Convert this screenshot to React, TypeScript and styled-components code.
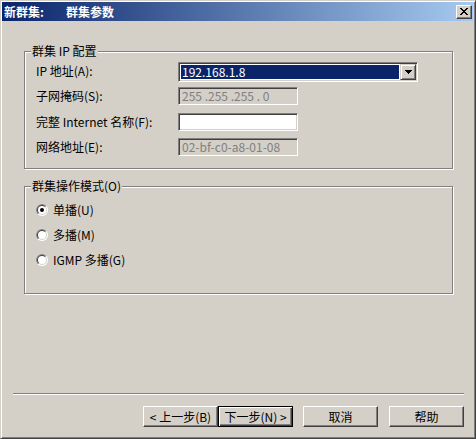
import React from 'react'
import styled, { createGlobalStyle } from 'styled-components'

const GlobalStyle = createGlobalStyle`
  html, body {
    margin: 0;
    padding: 0;
    background: #d4d0c8;
  }
  body {
    font-family: "Noto Sans CJK SC", "DejaVu Sans", sans-serif;
    font-size: 12px;
    color: #000;
  }
  * {
    box-sizing: border-box;
  }
`

function CloseGlyph() {
  return (
    <svg width="8" height="7" viewBox="0 0 8 7" shapeRendering="crispEdges">
      <path
        d="M0 0h2v1h-2z M6 0h2v1h-2z M1 1h2v1h-2z M5 1h2v1h-2z M2 2h4v1h-4z M3 3h2v1h-2z M2 4h4v1h-4z M1 5h2v1h-2z M5 5h2v1h-2z M0 6h2v1h-2z M6 6h2v1h-2z"
        fill="#000"
      />
    </svg>
  )
}

function DownArrow() {
  return (
    <svg width="7" height="4" viewBox="0 0 7 4" shapeRendering="crispEdges">
      <path d="M0 0h7v1h-1v1h-1v1h-1v1h-1v-1h-1v-1h-1v-1h-1z" fill="#000" />
    </svg>
  )
}

// classic 3d radio circle
function RadioMark({ checked }: { checked?: boolean }) {
  return (
    <svg width="12" height="12" viewBox="0 0 12 12">
      <circle cx="6" cy="6" r="6" fill="#fff" />
      <path d="M1.757 10.243 A6 6 0 0 1 10.243 1.757 Z" fill="#808080" />
      <circle cx="6" cy="6" r="5" fill="#d4d0c8" />
      <path d="M2.464 9.536 A5 5 0 0 1 9.536 2.464 Z" fill="#404040" />
      <circle cx="6" cy="6" r="4" fill="#fff" />
      {checked && <circle cx="6" cy="6" r="2" fill="#000" />}
    </svg>
  )
}

function App() {
  return (
    <>
      <GlobalStyle />
      <Window>
        <TitleBar>
          <Title>
            新群集:<TitlePart>群集参数</TitlePart>
          </Title>
          <CloseButton>
            <CloseGlyph />
          </CloseButton>
        </TitleBar>

        <Main>
          <GroupBox>
            <Legend>群集 IP 配置</Legend>
            <FormGrid>
              <Label>IP 地址(A):</Label>
              <Combo>
                <ComboValue>192.168.1.8</ComboValue>
                <ComboButton>
                  <DownArrow />
                </ComboButton>
              </Combo>

              <Label $disabled>子网掩码(S):</Label>
              <TextBox $disabled>255 .255 .255 . 0</TextBox>

              <Label>完整 Internet 名称(F):</Label>
              <TextBox />

              <Label $disabled>网络地址(E):</Label>
              <TextBox $disabled>02-bf-c0-a8-01-08</TextBox>
            </FormGrid>
          </GroupBox>

          <GroupBox $gap={10}>
            <Legend>群集操作模式(O)</Legend>
            <RadioList>
              <RadioRow>
                <RadioMark checked />
                <span>单播(U)</span>
              </RadioRow>
              <RadioRow>
                <RadioMark />
                <span>多播(M)</span>
              </RadioRow>
              <RadioRow>
                <RadioMark />
                <span>IGMP 多播(G)</span>
              </RadioRow>
            </RadioList>
          </GroupBox>
        </Main>

        <Separator />
        <ButtonRow>
          <PushButton>&lt; 上一步(B)</PushButton>
          <PushButton $default>下一步(N) &gt;</PushButton>
          <PushButton $space={10}>取消</PushButton>
          <PushButton $space={11}>帮助</PushButton>
        </ButtonRow>
      </Window>
    </>
  )
}

export default App

const Window = styled.div`
  width: 476px;
  height: 439px;
  display: flex;
  flex-direction: column;
  background: #d4d0c8;
  border: 1px solid;
  border-color: #d4d0c8 #404040 #404040 #d4d0c8;
  box-shadow: inset 1px 1px 0 #fff, inset -1px -1px 0 #808080;
  padding: 1px 2px 1px 1px;
`

const TitleBar = styled.div`
  height: 19px;
  flex-shrink: 0;
  display: flex;
  align-items: center;
  justify-content: space-between;
  padding-left: 2px;
  background: linear-gradient(to right, #0a246a, #a6caf0);
`

const Title = styled.div`
  color: #fff;
  font-weight: 700;
  font-size: 12px;
  line-height: 14px;
  white-space: nowrap;
  padding-top: 1px;
`

const TitlePart = styled.span`
  margin-left: 22px;
`

const CloseButton = styled.div`
  width: 16px;
  height: 14px;
  margin-right: 1px;
  display: flex;
  align-items: center;
  justify-content: center;
  background: #d4d0c8;
  border: 1px solid;
  border-color: #fff #404040 #404040 #fff;
  box-shadow: inset -1px -1px 0 #808080;
`

const Main = styled.div`
  flex: 1;
  display: flex;
  flex-direction: column;
  padding: 23px 20px 0 22px;
`

const GroupBox = styled.fieldset<{ $gap?: number }>`
  margin: ${(p) => p.$gap ?? 0}px 0 0 0;
  padding: 0;
  min-width: 0;
  border: 1px solid #808080;
  box-shadow: inset 1px 1px 0 #fff, 1px 1px 0 #fff;
`

const Legend = styled.legend`
  margin-left: 6px;
  padding: 0 1px;
  font-size: 12px;
  line-height: 14px;
  background: #d4d0c8;
`

const FormGrid = styled.div`
  display: grid;
  grid-template-columns: 142px 1fr;
  grid-template-rows: 25px 26px 25px 18px;
  align-items: start;
  padding: 4px 12px 12px 11px;
`

const Label = styled.div<{ $disabled?: boolean }>`
  line-height: 18px;
  white-space: nowrap;
`

const Combo = styled.div`
  width: 240px;
  height: 20px;
  display: flex;
  background: #fff;
  border: 1px solid;
  border-color: #808080 #fff #fff #808080;
  box-shadow: inset 1px 1px 0 #404040, inset -1px -1px 0 #d4d0c8;
  padding: 1px;
`

const ComboValue = styled.div`
  flex: 1;
  margin: 1px;
  padding-left: 1px;
  background: #0a246a;
  color: #fff;
  font-size: 12px;
  line-height: 14px;
`

const ComboButton = styled.div`
  width: 16px;
  height: 16px;
  display: flex;
  align-items: center;
  justify-content: center;
  background: #d4d0c8;
  border: 1px solid;
  border-color: #d4d0c8 #404040 #404040 #d4d0c8;
  box-shadow: inset 1px 1px 0 #fff, inset -1px -1px 0 #808080;
`

const TextBox = styled.div<{ $disabled?: boolean }>`
  width: 120px;
  height: 18px;
  padding: 1px 3px 0;
  font-size: 12px;
  line-height: 14px;
  white-space: pre;
  background: ${(p) => (p.$disabled ? '#d4d0c8' : '#fff')};
  color: ${(p) => (p.$disabled ? '#808080' : '#000')};
  border: 1px solid;
  border-color: #808080 #fff #fff #808080;
  box-shadow: inset 1px 1px 0 #404040, inset -1px -1px 0 #d4d0c8;
`

const RadioList = styled.div`
  display: flex;
  flex-direction: column;
  padding: 4px 0 21px 11px;
`

const RadioRow = styled.div`
  height: 25px;
  display: flex;
  align-items: center;
  gap: 5px;
  white-space: nowrap;
`

const Separator = styled.div`
  flex-shrink: 0;
  height: 2px;
  margin: 0 9px 0 11px;
  border-top: 1px solid #808080;
  border-bottom: 1px solid #fff;
`

const ButtonRow = styled.div`
  flex-shrink: 0;
  display: flex;
  justify-content: flex-end;
  margin: 11px 0 10px;
  padding-right: 9px;
`

const PushButton = styled.div<{ $default?: boolean; $space?: number }>`
  width: 75px;
  height: 21px;
  margin-left: ${(p) => p.$space ?? 0}px;
  display: flex;
  align-items: center;
  justify-content: center;
  font-size: 12px;
  white-space: nowrap;
  background: #d4d0c8;
  border: 1px solid;
  border-color: ${(p) => (p.$default ? '#000' : '#fff #404040 #404040 #fff')};
  box-shadow: ${(p) =>
    p.$default
      ? 'inset 1px 1px 0 #fff, inset -1px -1px 0 #404040, inset -2px -2px 0 #808080'
      : 'inset -1px -1px 0 #808080'};
`
